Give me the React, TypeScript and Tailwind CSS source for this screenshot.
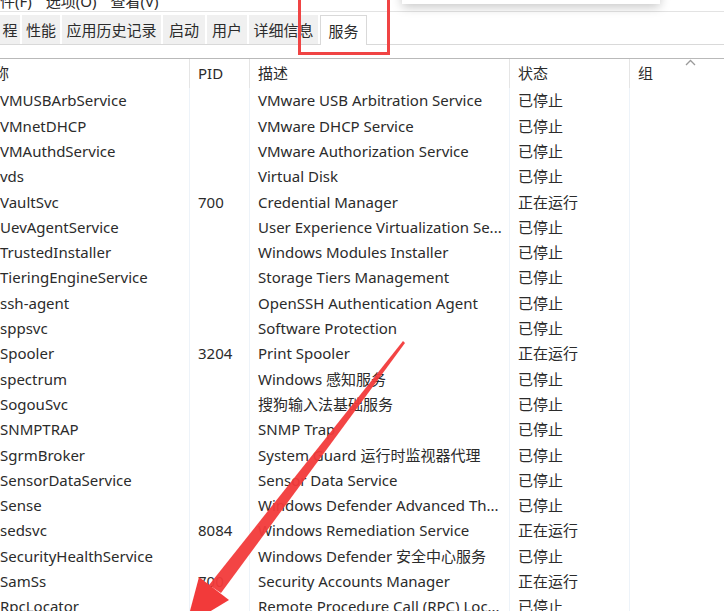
const rows: [string, string, string, string][] = [
  ["VMUSBArbService", "", "VMware USB Arbitration Service", "已停止"],
  ["VMnetDHCP", "", "VMware DHCP Service", "已停止"],
  ["VMAuthdService", "", "VMware Authorization Service", "已停止"],
  ["vds", "", "Virtual Disk", "已停止"],
  ["VaultSvc", "700", "Credential Manager", "正在运行"],
  ["UevAgentService", "", "User Experience Virtualization Se...", "已停止"],
  ["TrustedInstaller", "", "Windows Modules Installer", "已停止"],
  ["TieringEngineService", "", "Storage Tiers Management", "已停止"],
  ["ssh-agent", "", "OpenSSH Authentication Agent", "已停止"],
  ["sppsvc", "", "Software Protection", "已停止"],
  ["Spooler", "3204", "Print Spooler", "正在运行"],
  ["spectrum", "", "Windows 感知服务", "已停止"],
  ["SogouSvc", "", "搜狗输入法基础服务", "已停止"],
  ["SNMPTRAP", "", "SNMP Trap", "已停止"],
  ["SgrmBroker", "", "System Guard 运行时监视器代理", "已停止"],
  ["SensorDataService", "", "Sensor Data Service", "已停止"],
  ["Sense", "", "Windows Defender Advanced Th...", "已停止"],
  ["sedsvc", "8084", "Windows Remediation Service", "正在运行"],
  ["SecurityHealthService", "", "Windows Defender 安全中心服务", "已停止"],
  ["SamSs", "700", "Security Accounts Manager", "正在运行"],
  ["RpcLocator", "", "Remote Procedure Call (RPC) Loc...", "已停止"],
];

const tabs = [
  { label: "程", w: "w-[20px]" },
  { label: "性能", w: "w-[38px]" },
  { label: "应用历史记录", w: "w-[99px]" },
  { label: "启动", w: "w-[42px]" },
  { label: "用户", w: "w-[40px]" },
  { label: "详细信息", w: "w-[69px]" },
];

const cols = "grid grid-cols-[190px_60px_260px_120px_1fr]";

export default function App() {
  return (
    <div
      className="relative w-[724px] h-[611px] overflow-hidden bg-white text-[#2b2b2b] text-[15px]"
      style={{ fontFamily: '"Noto Sans", "Noto Sans CJK SC", sans-serif' }}
    >
      {/* menu bar, cut at top */}
      <div className="h-[12px] border-b border-[#e3e3e3] overflow-hidden">
        <div className="flex gap-[14px] -mt-[9px] leading-[20px] -ml-[15px]">
          <span>文件(F)</span>
          <span>选项(O)</span>
          <span>查看(V)</span>
        </div>
      </div>

      {/* tabs */}
      <div className="flex items-end h-[33px] border-b border-[#d9d9d9] gap-[2px]">
        {tabs.map((t) => (
          <div
            key={t.label}
            className={`${t.w} h-[29px] pt-[2px] bg-[#f0f0f0] flex items-center justify-center whitespace-nowrap overflow-hidden`}
          >
            {t.label}
          </div>
        ))}
        <div className="w-[47px] h-[30px] pt-[2px] bg-white border border-b-0 border-[#d9d9d9] -mb-px flex items-center justify-center">
          服务
        </div>
      </div>

      <div className="h-[13px]" />

      {/* header */}
      <div className={`${cols} h-[30px] border-t border-[#b9b9b9] relative`}>
        <div className="flex items-center -ml-[21px] border-r border-[#e5e5e5]">名称</div>
        <div className="flex items-center pl-[8px] border-r border-[#e5e5e5]">PID</div>
        <div className="flex items-center pl-[8px] border-r border-[#e5e5e5]">描述</div>
        <div className="flex items-center pl-[8px] border-r border-[#e5e5e5]">状态</div>
        <div className="flex items-center pl-[8px]">组</div>
        <svg className="absolute left-[685px] top-[0px]" width="11" height="7" viewBox="0 0 11 7">
          <path d="M1 6 L5.5 1.5 L10 6" fill="none" stroke="#9a9a9a" strokeWidth="1.3" />
        </svg>
      </div>

      {/* rows */}
      <div>
        {rows.map(([name, pid, desc, status]) => (
          <div key={name} className={`${cols} h-[25.3px]`}>
            <div className="flex items-center whitespace-nowrap border-r border-[#edf3f9]">{name}</div>
            <div className="flex items-center pl-[8px] border-r border-[#edf3f9]">{pid}</div>
            <div className="flex items-center pl-[8px] whitespace-nowrap overflow-hidden border-r border-[#edf3f9]">{desc}</div>
            <div className="flex items-center pl-[8px] border-r border-[#edf3f9]">{status}</div>
            <div />
          </div>
        ))}
      </div>

      {/* popup edge at top right */}
      <div className="absolute left-[402px] top-[-30px] w-[258px] h-[34px] bg-white shadow-[0_3px_10px_rgba(0,0,0,0.22)]" />

      {/* red highlight rectangle */}
      <div className="absolute left-[298px] top-[-10px] w-[92px] h-[65px] border-[3px] border-[#f04444]" />

      {/* red arrow */}
      <svg className="absolute left-0 top-0 pointer-events-none" width="724" height="611" viewBox="0 0 724 611">
        <polygon points="403,341 405,343 221,593 209,585" fill="#f23a3a" opacity="0.95" />
        <polygon points="229,600 186,626 199,577" fill="#f23a3a" />
      </svg>
    </div>
  );
}
